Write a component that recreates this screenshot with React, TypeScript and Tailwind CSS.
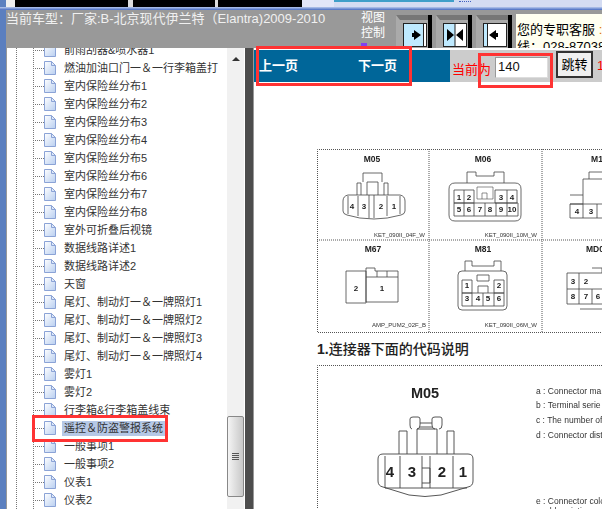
const TREE_ROWS = [
  '前雨刮器&喷水器1',
  '燃油加油口门一＆一行李箱盖打',
  '室内保险丝分布1',
  '室内保险丝分布2',
  '室内保险丝分布3',
  '室内保险丝分布4',
  '室内保险丝分布5',
  '室内保险丝分布6',
  '室内保险丝分布7',
  '室内保险丝分布8',
  '室外可折叠后视镜',
  '数据线路详述1',
  '数据线路详述2',
  '天窗',
  '尾灯、制动灯一＆一牌照灯1',
  '尾灯、制动灯一＆一牌照灯2',
  '尾灯、制动灯一＆一牌照灯3',
  '尾灯、制动灯一＆一牌照灯4',
  '雾灯1',
  '雾灯2',
  '行李箱&行李箱盖线束',
  '遥控＆防盗警报系统',
  '一般事项1',
  '一般事项2',
  '仪表1',
  '仪表2',
];

const SANS = "font-['Liberation_Sans','Noto_Sans_CJK_SC',sans-serif]";

function PageIcon() {
  return (
    <svg width="12" height="14" viewBox="0 0 12 14" className="shrink-0">
      <defs>
        <linearGradient id="pg" x1="0" y1="0" x2="1" y2="1">
          <stop offset="0" stopColor="#ffffff" />
          <stop offset="1" stopColor="#b9cff0" />
        </linearGradient>
      </defs>
      <path d="M0.5 0.5H7.5L11.5 4.5V13.5H0.5Z" fill="url(#pg)" stroke="#8ba3d6" />
      <path d="M7.5 0.5V4.5H11.5" fill="none" stroke="#8ba3d6" />
    </svg>
  );
}

function TreeRow({ label, selected }: { label: string; selected: boolean }) {
  return (
    <div className="flex h-[18px] items-center pl-[33px]">
      <div className="w-[11px] shrink-0 border-t border-dotted border-[#777]" />
      <PageIcon />
      <span
        className={`ml-[6px] shrink-0 px-[2px] text-[11px] leading-[15px] whitespace-nowrap text-[#333] ${selected ? 'bg-[#b5c8e6]' : ''}`}
      >
        {label}
      </span>
    </div>
  );
}

function ViewButton({ kind }: { kind: 'next' | 'both' | 'prev' }) {
  return (
    <div className="relative flex h-[33px] w-[36px] items-end justify-center border-t-[5px] border-l-[4px] border-t-[#777] border-l-[#aaa] bg-[#aaa] pb-px">
      <div className="absolute top-[-5px] right-0 h-[33px] w-[4px] bg-black" />
      <svg width="24" height="24" viewBox="0 0 24 24" className="mr-[3px]">
        <rect x="0.5" y="0.5" width="23" height="23" fill="#fff" stroke="#222" />
        {kind === 'next' && (
          <>
            <rect x="1" y="1" width="19" height="22" fill="#bfeaff" />
            <line x1="20.5" y1="1" x2="20.5" y2="23" stroke="#222" />
            <path d="M11 7L18 12L11 17V14H9V10H11Z" fill="#000" />
          </>
        )}
        {kind === 'both' && (
          <>
            <rect x="1" y="1" width="11" height="22" fill="#bfeaff" />
            <line x1="12" y1="1" x2="12" y2="23" stroke="#222" />
            <path d="M4 6L11 12L4 18Z M20 6L13 12L20 18Z" fill="#000" />
          </>
        )}
        {kind === 'prev' && (
          <>
            <rect x="1" y="1" width="3" height="22" fill="#bfeaff" />
            <line x1="4.5" y1="1" x2="4.5" y2="23" stroke="#222" />
            <path d="M13 7L6 12L13 17V14H15V10H13Z" fill="#000" />
          </>
        )}
      </svg>
    </div>
  );
}

const GRID_DIGITS: [string, number, number][] = [
  ['4', 35, 60], ['3', 47, 60], ['2', 64, 60], ['1', 77, 60],
  ['1', 142, 51], ['2', 152, 51], ['3', 184, 51], ['4', 195, 51],
  ['5', 142, 63], ['6', 152, 63], ['7', 163, 63], ['8', 173, 63], ['9', 184, 63], ['10', 195, 63],
  ['4', 260, 65], ['3', 274, 65],
  ['2', 39, 142], ['1', 65, 142],
  ['1', 150, 139], ['2', 182, 139], ['3', 150, 152], ['4', 161, 152], ['5', 171, 152], ['6', 182, 152],
  ['3', 256, 135], ['2', 269, 135], ['8', 256, 150], ['7', 269, 150], ['6', 281, 150],
];

function ConnectorGrid() {
  return (
    <svg width="285" height="184" viewBox="0 0 285 184" className="block blur-[0.3px]" fontFamily="Liberation Sans, sans-serif">
      <g fill="none" stroke="#555" strokeDasharray="1 1">
        <path d="M285 0.5H0.5V183.5H285" />
        <line x1="112" y1="0" x2="112" y2="184" />
        <line x1="225" y1="0" x2="225" y2="184" />
        <line x1="0" y1="91" x2="285" y2="91" />
      </g>
      <g fontSize="8.5" fill="#222" textAnchor="middle" fontWeight="700">
        <text x="55" y="13">M05</text>
        <text x="166" y="13">M06</text>
        <text x="280" y="13">M1</text>
        <text x="56" y="103">M67</text>
        <text x="166" y="103">M81</text>
        <text x="278" y="103">MD0</text>
      </g>
      <g fontSize="6" fill="#333" textAnchor="end">
        <text x="108" y="88">KET_090II_04F_W</text>
        <text x="220" y="88">KET_090II_10M_W</text>
        <text x="109" y="178">AMP_PUM2_02F_B</text>
        <text x="220" y="178">KET_090II_06M_W</text>
      </g>
      <g fill="none" stroke="#444" strokeWidth="0.8">
        {/* M05 */}
        <path d="M31 46H83Q88 47 88 52V62Q88 65 84 66Q70 70 57 70Q42 70 30 66Q26 65 26 62V52Q26 47 31 46Z" />
        <path d="M40 46V34H44V46M67 46V34H71V46M50 46V33H61V46M46 33V24H65V33" />
        <path d="M31 47V65M41 47V67M52 46V69M57 46V69M70 47V67M83 47V65" />
        {/* M06 */}
        <path d="M138 34H198Q204 34 204 40V66Q204 72 198 72H138Q132 72 132 66V40Q132 34 138 34Z" />
        <path d="M150 34V23H159V27H177V23H187V34" />
        <path d="M137 41H157V54H137ZM178 41H200V54H178ZM137 54H201V67H137ZM147 41V67M157 54V67M168 54V67M179 54V67M190 41V67" />
        <path d="M160 38H176V50H160ZM165 50V44H170V50" strokeWidth="0.6" />
        {/* M1x */}
        <path d="M253 46H266V55H253V69H285M253 55H285M266 55V69M280 55V69M266 46V30H272V23H285M272 30H285" />
        {/* M67 */}
        <path d="M29 122H49V154H29ZM49 128H81V153H49ZM49 128V119H58V122H81V128M60 122V128M70 122V128" />
        {/* M81 */}
        <path d="M145 122H186Q190 122 190 126V157Q190 161 186 161H145Q141 161 141 157V126Q141 122 145 122Z" />
        <path d="M148 122V112H155V117H177V112H184V122" />
        <path d="M145 131H155V144H145ZM177 131H187V144H177ZM145 144H187V157H145ZM155 144V157M166 144V157M177 144V157M161 144V137H171V144M160 126H172V132H160Z" />
        {/* MD0 */}
        <path d="M250 124H285M250 124V155H285M250 140H285M262 124V155M275 140V155M275 119H285V124M263 160H285" />
      </g>
      <g fontSize="8" fill="#222" textAnchor="middle" fontWeight="700">
        {GRID_DIGITS.map(([v, x, y]) => (
          <text key={`${v}-${x}-${y}`} x={x} y={y}>{v}</text>
        ))}
      </g>
    </svg>
  );
}

function LegendDiagram() {
  return (
    <svg width="285" height="145" viewBox="0 0 285 145" className="block blur-[0.3px]" fontFamily="Liberation Sans, sans-serif">
      <path d="M0.5 145V0.5H285" fill="none" stroke="#555" strokeDasharray="1 1" />
      <text x="108" y="33" fontSize="14.5" fontWeight="700" fill="#222" textAnchor="middle">M05</text>
      <g fontSize="8.5" fill="#333">
        <text x="219" y="29">a : Connector ma</text>
        <text x="219" y="43">b : Terminal serie</text>
        <text x="219" y="58">c : The number of</text>
        <text x="219" y="73">d : Connector dist</text>
        <text x="219" y="139">e : Connector colo</text>
      </g>
      <g fill="none" stroke="#444" strokeWidth="0.9">
        <path d="M66 89H151Q156 89 156 94V116Q156 121 151 122L124 130Q108 133 92 130L66 122Q61 121 61 116V94Q61 89 66 89Z" />
        <path d="M82 89V66H90V89M130 89V66H137V89M100 89V64H120V89" />
        <path d="M95 64Q93 64 93 60V54Q93 52 96 52H101Q103 52 103 54V60Q103 64 100 64M118 64Q115 64 115 60V54Q115 52 118 52H123Q125 52 125 54V60Q125 64 122 64M103 58H115M103 62H115" />
        <path d="M68 91V123M83 91V123M105 91V123M113 91V123M136 91V123M68 123H150M105 103H113V118H105" />
      </g>
      <g fontSize="15" fontWeight="700" fill="#222" textAnchor="middle">
        <text x="73" y="112">4</text>
        <text x="95" y="112">3</text>
        <text x="125" y="112">2</text>
        <text x="146" y="112">1</text>
      </g>
      <text x="228" y="149" fontSize="8.5" fill="#333">abbreviations</text>
    </svg>
  );
}

export default function App() {
  return (
    <div className={`relative flex h-[509px] w-[602px] flex-col overflow-hidden bg-white ${SANS}`}>
      {/* top strip */}
      <div className="flex h-[7px] shrink-0 bg-[#d4dcf2]">
        <div className="w-[6px] bg-[#5b7fbf]" />
        <div className="w-[9px] bg-[#eee]" />
        <div className="w-[113px] bg-black" />
        <div className="w-[5px] bg-[#ddd]" />
        <div className="w-[82px] bg-black" />
        <div className="w-[3px] bg-[#ddd]" />
        <div className="w-[84px] bg-black" />
        <div className="w-[32px] bg-[#e2e6f8]" />
        <div className="h-[2px] w-[120px] bg-[#3f9fc9]" />
        <div className="mt-px ml-[5px] h-[2px] w-[12px] border-t border-dotted border-[#4060c0]" />
        <div className="flex-1" />
      </div>
      <div className="h-[3px] shrink-0 bg-gradient-to-b from-[#b8c8ec] to-[#4a6cc0]" />

      {/* header bar */}
      <div className="flex h-[38px] shrink-0 bg-[#999]">
        <div className="w-[6px] shrink-0 bg-[#5b7fbf]" />
        <div className="w-[355px] shrink-0 pt-[1px] text-[13px] leading-[16px] whitespace-nowrap text-[#f0f0f0]">
          当前车型：厂家:B-北京现代伊兰特（Elantra)2009-2010
        </div>
        <div className="relative w-[35px] shrink-0 text-[12px] leading-[15px] text-white">
          <div className="pt-px">视图</div>
          <div>控制</div>
          <div className="absolute top-[33px] left-0 h-[5px] w-[6px] bg-[#8040f0]" />
        </div>
        <div className="flex w-[120px] shrink-0 items-end gap-[4px]">
          <ViewButton kind="next" />
          <ViewButton kind="both" />
          <ViewButton kind="prev" />
        </div>
        <div className="mt-[4px] flex-1 overflow-hidden bg-[#fffff0] pt-[7px] pl-[1px] text-[13px] leading-[17px] whitespace-nowrap text-black">
          <div>您的专职客服 <span className="text-[#e07000]">:</span></div>
          <div>线：028-87038</div>
        </div>
      </div>

      {/* main row */}
      <div className="flex min-h-0 flex-1">
        <div className="w-[6px] shrink-0 bg-[#5b7fbf]" />
        <div className="w-px shrink-0 bg-[#999]" />

        {/* tree */}
        <div className="relative w-[220px] shrink-0 overflow-hidden">
          <div className="absolute top-0 bottom-0 left-[9px] border-l border-dotted border-[#777]" />
          <div className="absolute top-0 bottom-0 left-[26px] border-l border-dotted border-[#777]" />
          <div className="-mt-[7px] -ml-[7px]">
            {TREE_ROWS.map((row) => (
              <TreeRow key={row} label={row} selected={row === '遥控＆防盗警报系统'} />
            ))}
          </div>
        </div>

        {/* scrollbar */}
        <div className="flex w-[17px] shrink-0 flex-col bg-[#f1f1f1]">
          <div className="flex h-[20px] items-center justify-center pt-[2px]">
            <div className="h-0 w-0 border-r-[4px] border-b-[4px] border-l-[4px] border-r-transparent border-b-[#333] border-l-transparent" />
          </div>
          <div className="mt-[348px] flex h-[81px] flex-col items-center justify-center gap-px rounded-[2px] border border-[#888] bg-gradient-to-r from-[#f4f4f4] to-[#c8c8c8]">
            <div className="h-px w-[7px] bg-[#555]" />
            <div className="h-px w-[7px] bg-[#555]" />
            <div className="h-px w-[7px] bg-[#555]" />
            <div className="h-px w-[7px] bg-[#555]" />
          </div>
        </div>
        <div className="w-[1px] shrink-0 bg-white" />

        {/* splitter */}
        <div className="w-[8px] shrink-0 bg-[#4d4d4d]" />
        <div className="w-[1px] shrink-0 bg-[#999]" />

        {/* document */}
        <div className="flex min-w-0 flex-1 flex-col overflow-hidden">
          <div className="mt-[2px] flex h-[32px] shrink-0 items-center bg-[#006699]">
            <div className="flex w-[196px] shrink-0 pl-[5px] text-[13px] font-bold text-white">
              <span className="w-[99px]">上一页</span>
              <span>下一页</span>
            </div>
            <div className="flex h-full flex-1 items-center bg-[#ccc] pl-[2px]">
              <span className="mt-[8px] text-[13px] whitespace-nowrap text-[#ff0000]">当前为</span>
              <div className="mt-[2px] ml-[4px] flex h-[21px] w-[53px] shrink-0 items-center border border-[#999] border-r-[#ddd] border-b-[#ddd] bg-white pl-[2px] text-[13px] text-[#111]">
                140
              </div>
              <button className="mb-[3px] ml-[8px] h-[27px] w-[37px] shrink-0 border-2 border-[#333] bg-[#f0f0f0] text-[13px] text-black">
                跳转
              </button>
              <span className="ml-[4px] text-[13px] text-[#ff0000]">1</span>
            </div>
          </div>

          <div className="mt-[67px] pl-[63px]">
            <ConnectorGrid />
            <div className="mt-[6px] text-[14px] leading-[20px] font-medium text-[#222]">
              <span className="font-bold">1.</span>连接器下面的代码说明
            </div>
            <div className="mt-[6px]">
              <LegendDiagram />
            </div>
          </div>
        </div>
      </div>

      {/* red annotation boxes */}
      <div className="absolute top-[46px] left-[256px] h-[40px] w-[156px] border-[3px] border-[#ff3333]" />
      <div className="absolute top-[53px] left-[478px] h-[35px] w-[75px] border-[3px] border-[#ff3333]" />
      <div className="absolute top-[415px] left-[32px] h-[27px] w-[136px] border-[3px] border-[#ff3333]" />
    </div>
  );
}
